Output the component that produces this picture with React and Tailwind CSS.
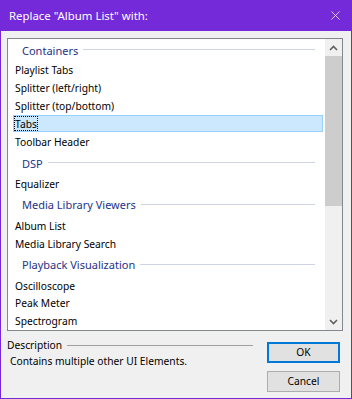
import { X } from 'lucide-react';

const rows = [
    { type: 'group', label: 'Containers', first: true },
    { type: 'item', label: 'Playlist Tabs' },
    { type: 'item', label: 'Splitter (left/right)' },
    { type: 'item', label: 'Splitter (top/bottom)' },
    { type: 'item', label: 'Tabs', selected: true },
    { type: 'item', label: 'Toolbar Header' },
    { type: 'group', label: 'DSP' },
    { type: 'item', label: 'Equalizer' },
    { type: 'group', label: 'Media Library Viewers' },
    { type: 'item', label: 'Album List' },
    { type: 'item', label: 'Media Library Search' },
    { type: 'group', label: 'Playback Visualization' },
    { type: 'item', label: 'Oscilloscope' },
    { type: 'item', label: 'Peak Meter' },
    { type: 'item', label: 'Spectrogram' },
];

const Chevron = ({ down }) => (
    <svg width="9" height="6" viewBox="0 0 9 6" className={down ? 'rotate-180' : ''}>
        <path d="M1 5 L4.5 1.5 L8 5" fill="none" stroke="#606060" strokeWidth="1.6" />
    </svg>
);

const Row = ({ row }) => {
    if (row.type === 'group') {
        return (
            <div className={`flex items-center pl-[14px] pr-[10px] ${row.first ? 'h-[22px]' : 'h-[24px]'}`}>
                <span className="text-[#1e3287] text-[11px] leading-none pt-px">{row.label}</span>
                <div className="flex-1 h-px bg-[#cfd3e6] ml-[5px]" />
            </div>
        );
    }
    return (
        <div className="h-[18px] flex items-center pl-[5px] pr-[2px]">
            <div
                className={`flex-1 h-[17px] flex items-center border ${
                    row.selected ? 'bg-[#cce8ff] border-[#99d1ff]' : 'border-transparent'
                }`}
            >
                <span
                    className={`text-[10.25px] leading-none text-black px-px pt-px h-full flex items-center ${
                        row.selected ? 'outline-1 outline-dotted outline-black -outline-offset-1' : ''
                    }`}
                >
                    {row.label}
                </span>
            </div>
        </div>
    );
};

const App = () => {
    return (
        <div
            className="w-[352px] h-[399px] bg-[#f0f0f0] border border-t-0 border-[#742ad8] flex flex-col"
            style={{ fontFamily: '"Noto Sans", "Liberation Sans", sans-serif' }}
        >
            <div className="h-[31px] bg-[#742ad8] -mx-px flex items-center justify-between pl-[9px] pr-[9px]">
                <span className="text-white text-[11.4px]">Replace "Album List" with:</span>
                <X size={15} color="#ffffff" strokeWidth={1.2} />
            </div>

            <div className="mt-[7px] ml-[6px] mr-[8px] h-[293px] border border-[#828790] bg-white flex">
                <div className="flex-1 flex flex-col">
                    {rows.map((row) => (
                        <Row key={row.label} row={row} />
                    ))}
                </div>
                <div className="w-[17px] bg-[#f0f0f0] flex flex-col">
                    <div className="h-[17px] flex items-center justify-center">
                        <Chevron />
                    </div>
                    <div className="h-[150px] bg-[#cdcdcd]" />
                    <div className="flex-1" />
                    <div className="h-[17px] flex items-center justify-center">
                        <Chevron down />
                    </div>
                </div>
            </div>

            <div className="flex mt-[6px] ml-[6px] mr-[11px]">
                <div className="w-[246px] flex flex-col">
                    <div className="flex items-center h-[16px]">
                        <span className="text-[10.25px] text-black leading-none">Description</span>
                        <div className="flex-1 h-px bg-[#a0a0a0] ml-[5px]" />
                    </div>
                    <div className="text-[10.25px] text-black leading-none mt-[3px] ml-[3px]">
                        Contains multiple other UI Elements.
                    </div>
                </div>
                <div className="ml-auto flex flex-col gap-[8px] mt-[5px]">
                    <button className="w-[73px] h-[21px] bg-[#e1e1e1] border-2 border-[#0078d7] text-[10.25px] text-black leading-none">
                        OK
                    </button>
                    <button className="w-[73px] h-[21px] bg-[#e1e1e1] border border-[#adadad] text-[10.25px] text-black leading-none">
                        Cancel
                    </button>
                </div>
            </div>
        </div>
    );
};

export default App;
